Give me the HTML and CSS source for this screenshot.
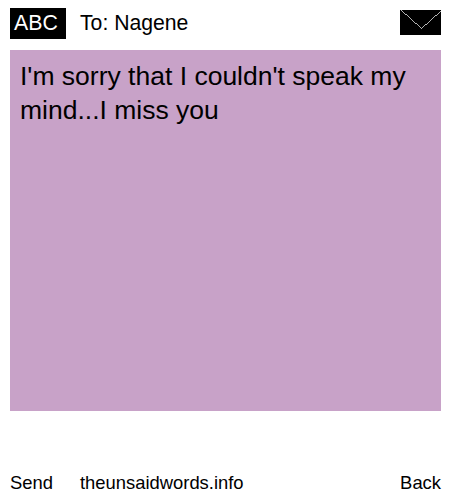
FILE: index.html
```html
<!DOCTYPE html>
<html lang="en">
<head>
    <meta charset="UTF-8">
    <meta name="viewport" content="width=device-width, initial-scale=1.0">
    <title>The Unsaid Words</title>
    <link rel="stylesheet" href="styles.css">
</head>
<body>

<div class="container">
    <div class="top-bar">
        <span class="abc-box">ABC</span>
        <span class="to-line">To: Nagene</span>
        <svg class="envelope" width="41" height="25" viewBox="0 0 41 25">
            <rect width="41" height="25" fill="#000"/>
            <path d="M0.5 0.5 L20.5 18.5 L40.5 0.5" fill="none" stroke="#fff" stroke-width="0.7" shape-rendering="crispEdges"/>
        </svg>
    </div>

    <div class="message-box">I'm sorry that I couldn't speak my mind...I miss you</div>

    <div class="bottom-bar">
        <span class="send-link">Send</span>
        <span class="site-link">theunsaidwords.info</span>
        <span class="back-link">Back</span>
    </div>
</div>

</body>
</html>
```

FILE: styles.css
```css
body, html {
    margin: 0;
    padding: 0;
    font-family: "Liberation Sans", Arial, sans-serif;
    background-color: #fff;
    color: #000;
}
.container {
    width: 431px;
    height: 492px;
    padding: 8px 9px 0 10px;
    display: flex;
    flex-direction: column;
}
.top-bar {
    display: flex;
    align-items: center;
    height: 31px;
}
.abc-box {
    background-color: #000;
    color: #fff;
    width: 52px;
    height: 31px;
    padding-left: 4px;
    line-height: 30px;
    font-size: 21.3px;
}
.to-line {
    margin-left: 14px;
    margin-bottom: 2px;
    font-size: 21.2px;
    flex: 1;
}
.envelope {
    display: block;
    margin-bottom: 2px;
}
.message-box {
    margin-top: 11px;
    height: 361px;
    background-color: #c8a2c8;
    padding: 9px 10px;
    box-sizing: border-box;
    font-size: 26.5px;
    line-height: 34px;
}
.bottom-bar {
    display: flex;
    margin-top: 61px;
    font-size: 18.4px;
    line-height: 22px;
}
.send-link {
    width: 70px;
}
.site-link {
    flex: 1;
}
```
